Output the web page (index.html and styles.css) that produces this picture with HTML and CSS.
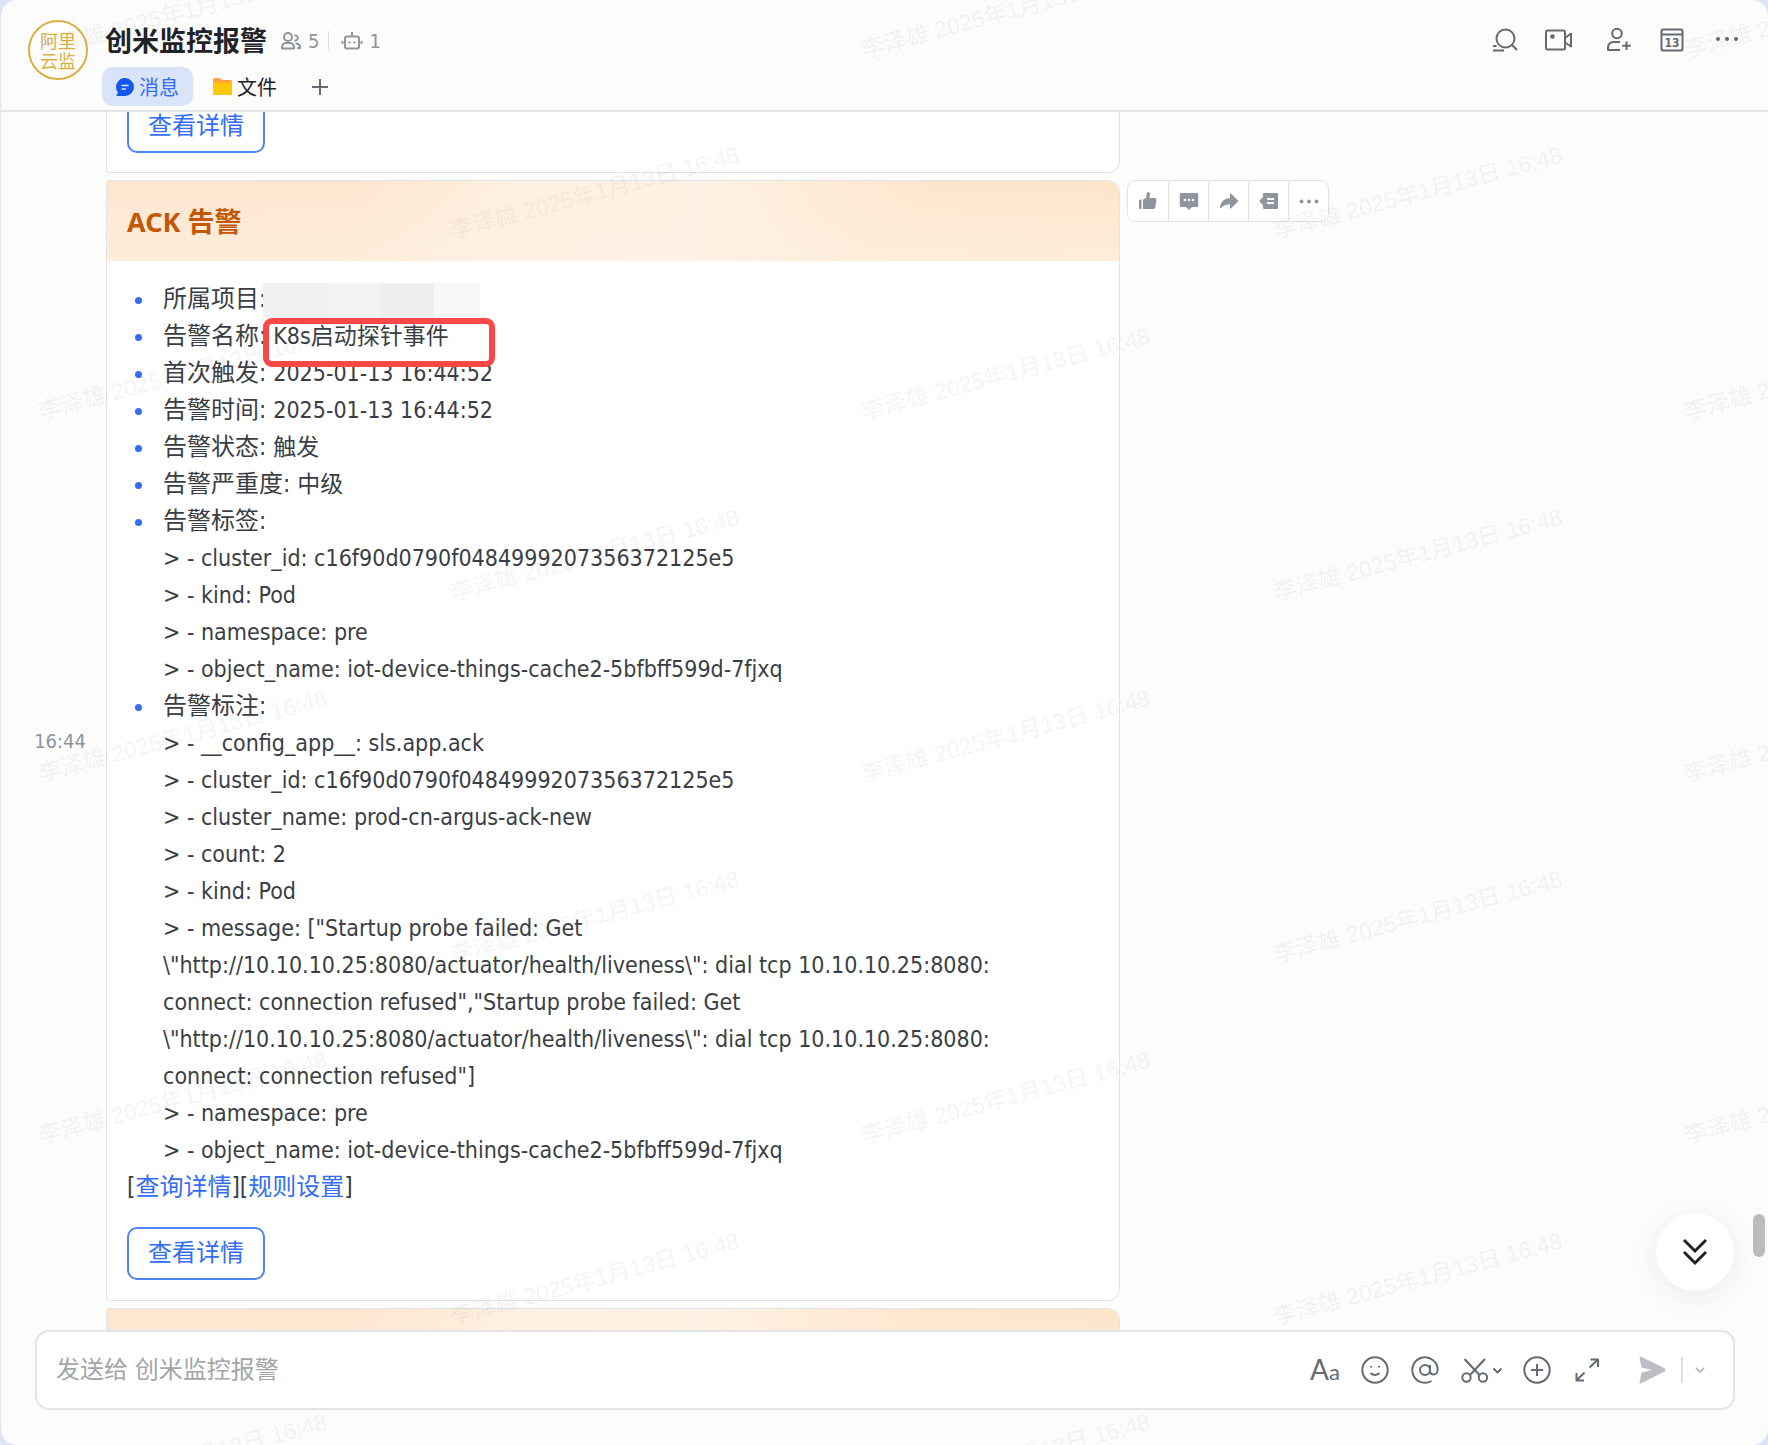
FILE: index.html
```html
<!DOCTYPE html>
<html lang="zh-CN">
<head>
<meta charset="utf-8">
<meta name="viewport" content="width=device-width, initial-scale=1">
<title>创米监控报警</title>
<link rel="stylesheet" href="styles.css">
</head>
<body>
<div class="window">
  <header class="chat-header">
    <div class="avatar">阿里<br>云监</div>
    <div class="chat-info">
      <div class="title-row">
        <h1 class="title">创米监控报警</h1>
        <div class="counts">
          <span class="count">
            <svg width="22" height="20" viewBox="0 0 22 20" class="line"><circle cx="8" cy="6" r="4"/><path d="M2 17.500c0-4 2-5.500 4-5.500h4c2.500 0 4 1.500 4 5.500z"/><path d="M14.500 4.500a2.600 2.600 0 1 1 0 5M15.500 12.500c3.500 0 4.700 1.500 4.700 4.500h-3"/></svg>
            5</span>
          <span class="count">
            <svg width="22" height="20" viewBox="0 0 22 20" class="line"><rect x="4" y="5.500" width="14" height="12" rx="2"/><path d="M11 5V1M1.500 10v3M20.500 10v3M8.500 10.500v2M13.500 10.500v2"/></svg>
            1</span>
        </div>
      </div>
      <nav class="tabs">
        <a href="#messages" class="tab tab-active">
          <svg width="18" height="18" viewBox="0 0 18 18"><path fill="#1456f0" d="M9 0a9 9 0 1 1 0 18H1.500A1 1 0 0 1 .7 16.500L2 14.500A9 9 0 0 1 9 0z"/><path d="M5.500 7.500h7M5.500 11h4.500" stroke="#dbe4fa" stroke-width="1.600"/></svg>
          消息</a>
        <a href="#files" class="tab">
          <svg width="19" height="17" viewBox="0 0 19 17"><path fill="#ff9f43" d="M0 1.500A1.500 1.500 0 0 1 1.500 0h5l2.500 2h8.500A1.500 1.500 0 0 1 19 3.500V8H0z"/><path fill="#ffc60a" d="M0 4.500h19v11a1.500 1.500 0 0 1-1.500 1.500h-16A1.500 1.500 0 0 1 0 15.500z"/></svg>
          文件</a>
        <button class="tab-add" type="button" aria-label="添加标签页"><svg width="16" height="16" viewBox="0 0 16 16" class="line"><path d="M8 0v16M0 8h16"/></svg></button>
      </nav>
    </div>
    <div class="header-actions">
      <button type="button" aria-label="搜索"><svg width="28" height="28" viewBox="-2 0 28 28" class="line"><circle cx="14.500" cy="12.500" r="9"/><path d="M21 19l5 5M2 20h3.500M2 24.500h11"/></svg></button>
      <button type="button" aria-label="视频会议"><svg width="28" height="28" viewBox="0 0 28 28" class="line"><rect x="1" y="4.500" width="19" height="19" rx="1.500"/><path d="M20 12l6-4.500v13L20 16.500"/><circle cx="7.500" cy="10.500" r="1.300" fill="#646a73"/></svg></button>
      <button type="button" aria-label="添加成员"><svg width="28" height="28" viewBox="-3 0 28 28" class="line"><circle cx="13" cy="7.500" r="4.800"/><path d="M16 16h-6c-4 0-6 2.500-6 6v2h12M22.500 15.500v8.500M18.200 19.800h8.600"/></svg></button>
      <button type="button" aria-label="日历"><svg width="28" height="28" viewBox="-1 0 28 28" class="line"><rect x="3.500" y="3.500" width="21" height="21" rx="1.500"/><path d="M3.500 8.500h21"/><text x="14" y="21" text-anchor="middle" class="cal-day">13</text></svg></button>
      <button type="button" aria-label="更多"><svg width="28" height="28" viewBox="0 0 28 28" class="dots"><circle cx="5" cy="13" r="2"/><circle cx="14" cy="13" r="2"/><circle cx="23" cy="13" r="2"/></svg></button>
    </div>
  </header>

  <main class="messages" id="messages">
    <article class="message">
      <section class="card card-tail">
        <button class="detail-button" type="button">查看详情</button>
      </section>
    </article>

    <article class="message">
      <time class="time">16:44</time>
      <section class="card">
        <h2 class="card-title">ACK 告警</h2>
        <div class="card-body">
          <ul class="fields">
            <li><span class="label">所属项目:</span><span class="redacted"></span></li>
            <li><span class="label">告警名称:</span><span class="value">K8s启动探针事件</span><span class="highlight"></span></li>
            <li><span class="label">首次触发:</span><span class="value">2025-01-13 16:44:52</span></li>
            <li><span class="label">告警时间:</span><span class="value">2025-01-13 16:44:52</span></li>
            <li><span class="label">告警状态:</span><span class="value">触发</span></li>
            <li><span class="label">告警严重度:</span><span class="value">中级</span></li>
            <li><span class="label">告警标签:</span>
              <p>&gt; - cluster_id: c16f90d0790f0484999207356372125e5</p>
              <p>&gt; - kind: Pod</p>
              <p>&gt; - namespace: pre</p>
              <p>&gt; - object_name: iot-device-things-cache2-5bfbff599d-7fjxq</p>
            </li>
            <li><span class="label">告警标注:</span>
              <p>&gt; - __config_app__: sls.app.ack</p>
              <p>&gt; - cluster_id: c16f90d0790f0484999207356372125e5</p>
              <p>&gt; - cluster_name: prod-cn-argus-ack-new</p>
              <p>&gt; - count: 2</p>
              <p>&gt; - kind: Pod</p>
              <p>&gt; - message: ["Startup probe failed: Get<br>\"http://10.10.10.25:8080/actuator/health/liveness\": dial tcp 10.10.10.25:8080:<br>connect: connection refused","Startup probe failed: Get<br>\"http://10.10.10.25:8080/actuator/health/liveness\": dial tcp 10.10.10.25:8080:<br>connect: connection refused"]</p>
              <p>&gt; - namespace: pre</p>
              <p>&gt; - object_name: iot-device-things-cache2-5bfbff599d-7fjxq</p>
            </li>
          </ul>
          <p class="links">[<a href="#query">查询详情</a>][<a href="#rules">规则设置</a>]</p>
          <button class="detail-button" type="button">查看详情</button>
        </div>
      </section>
      <div class="message-actions">
        <button type="button" aria-label="点赞"><svg width="20" height="20" viewBox="0 0 20 20"><path d="M1 9.500Q1 8.500 3.500 8.500V18Q1 18.500 1 17zM5 8.500L8 7l.8-5Q9.200.8 10.500 1q1.700.3 1.500 2.500L11.500 7H17q1.800.2 1.500 2l-1.300 7.500Q16.800 18 15.500 18H5z"/></svg></button>
        <button type="button" aria-label="回复"><svg width="20" height="20" viewBox="0 0 20 20"><path d="M2 2h16q1.200 0 1.200 1.200v11.600Q19.200 16 18 16h-5l-3 3-3-3H2Q.8 16 .8 14.800V3.200Q.8 2 2 2z"/><g fill="#fff"><circle cx="6" cy="9" r="1.300"/><circle cx="10" cy="9" r="1.300"/><circle cx="14" cy="9" r="1.300"/></g></svg></button>
        <button type="button" aria-label="转发"><svg width="20" height="20" viewBox="0 0 20 20"><path d="M11 3q0-1.200 1-.5l7 7q.5.500 0 1l-7 7q-1 .7-1-.5v-3.500q-6-.5-9 3.500-1 .5-1-.5Q2 7.500 11 7z"/></svg></button>
        <button type="button" aria-label="话题"><svg width="20" height="20" viewBox="0 0 20 20"><path d="M5 2h13q1 0 1 1v14q0 1-1 1H5q-1 0-1-1v-3L.8 10.700q-.6-.7 0-1.400L4 6V3q0-1 1-1z"/><path d="M8 8h7M8 12h7" stroke="#fff" stroke-width="1.800"/></svg></button>
        <button type="button" aria-label="更多操作"><svg width="20" height="20" viewBox="0 0 20 20"><circle cx="2.500" cy="10.500" r="2"/><circle cx="10" cy="10.500" r="2"/><circle cx="17.500" cy="10.500" r="2"/></svg></button>
      </div>
    </article>

    <article class="message">
      <section class="card">
        <h2 class="card-title">ACK 告警</h2>
      </section>
    </article>

    <button class="jump-latest" type="button" aria-label="跳到最新"><svg width="26" height="28" viewBox="0 0 26 28"><path d="M2 2l11 11L24 2M2 14l11 11L24 14"/></svg></button>
    <div class="scroll-thumb"></div>
  </main>

  <form class="composer">
    <input type="text" class="composer-input" aria-label="消息" placeholder="发送给 创米监控报警">
    <div class="composer-actions">
      <button type="button" class="format" aria-label="格式">A<span class="format-small">a</span></button>
      <button type="button" aria-label="表情"><svg width="30" height="30" viewBox="0 0 30 30" class="line"><circle cx="15" cy="15" r="12.700"/><path d="M10.500 18q4.500 4 9 0"/><path d="M11 11v1.500M19 11v1.500"/></svg></button>
      <button type="button" aria-label="提及"><svg width="30" height="30" viewBox="0 0 30 30" class="line"><circle cx="15" cy="15" r="5"/><path d="M20 10v6.500q.5 3 3.500 3 3.700 0 4.200-4.500A12.700 12.700 0 1 0 21.500 26"/></svg></button>
      <button type="button" aria-label="截图"><svg width="42" height="30" viewBox="0 0 42 30" class="line"><path d="M4.500 4L20 20.500M25 4L9.500 20.500"/><circle cx="6.500" cy="22.500" r="4.200"/><circle cx="23" cy="22.500" r="4.200"/><path d="M33.500 13.500l4 4 4-4"/></svg></button>
      <button type="button" aria-label="添加"><svg width="30" height="30" viewBox="0 0 30 30" class="line"><circle cx="15" cy="15" r="12.700"/><path d="M15 9v12M9 15h12"/></svg></button>
      <button type="button" aria-label="展开"><svg width="30" height="30" viewBox="0 0 30 30" class="line"><path d="M17.500 12.500L26 4.500M18.500 4.500H26V12M12.500 17.500L4.500 25.500M4.500 18v7.500H12"/></svg></button>
      <button type="submit" class="send" aria-label="发送"><svg width="30" height="30" viewBox="0 0 30 30"><path fill="#bbbfc4" d="M2.500 2.300q.5-1 1.800-.6L28 13.500q1.500 1.300 0 2.700L4.300 28.300q-1.300.4-1.800-.6L4.500 17.500 15 15 4.500 12.500z"/></svg></button>
      <button type="button" class="send-more" aria-label="发送选项"><svg width="10" height="10" viewBox="0 0 10 10"><path d="M1 3l4 4 4-4" fill="none" stroke="#bbbfc4" stroke-width="2"/></svg></button>
    </div>
  </form>

  <svg class="watermark" width="100%" height="100%" aria-hidden="true">
    <defs>
      <pattern id="mark" width="823" height="362" patternUnits="userSpaceOnUse">
        <text transform="translate(40 58) rotate(-15)">李泽雄 2025年1月13日 16:48</text>
        <text transform="translate(40 420) rotate(-15)">李泽雄 2025年1月13日 16:48</text>
        <text transform="translate(452 239) rotate(-15)">李泽雄 2025年1月13日 16:48</text>
      </pattern>
    </defs>
    <rect width="100%" height="100%" fill="url(#mark)"/>
  </svg>
</div>
</body>
</html>
```

FILE: styles.css
```css
* {
  box-sizing: border-box;
  margin: 0;
  padding: 0;
}

body {
  background: #dee3f6;
  color: #3a3e44;
  font-family: "DejaVu Sans Condensed", "Noto Sans CJK SC", sans-serif;
}

button {
  display: flex;
  align-items: center;
  justify-content: center;
  border: 0;
  background: none;
  font: inherit;
  cursor: pointer;
}

a {
  color: #336df4;
  text-decoration: none;
}

svg {
  flex: none;
}

.line {
  fill: none;
  stroke: #646a73;
  stroke-width: 2;
  stroke-linejoin: round;
}

.window {
  position: relative;
  display: flex;
  flex-direction: column;
  height: 100vh;
  margin-left: 1px;
  padding-bottom: 35px;
  overflow: hidden;
  border-radius: 16px;
  background: #fcfcfb;
}

/* Header */

.chat-header {
  display: flex;
  align-items: flex-start;
  height: 112px;
  padding: 20px 27px 0;
  border-bottom: 2px solid #e3e4e5;
}

.avatar {
  display: flex;
  align-items: center;
  justify-content: center;
  width: 60px;
  height: 60px;
  padding-top: 3px;
  border: 2px solid #dcae42;
  border-radius: 50%;
  background: #fff;
  color: #dcae42;
  font-size: 18px;
  line-height: 20px;
}

.chat-info {
  flex: 1;
  margin-left: 14px;
}

.title-row {
  display: flex;
  align-items: center;
  height: 42px;
  padding-left: 3px;
}

.title {
  color: #1f2329;
  font-size: 27px;
  line-height: 42px;
  padding-top: 2px;
  font-weight: 700;
}

.counts {
  display: flex;
  align-items: center;
  margin-left: 13px;
  color: #8f959e;
  font-size: 20px;
  line-height: 20px;
}

.counts .line {
  stroke: #8f959e;
}

.count {
  display: flex;
  align-items: center;
  gap: 6px;
}

.count + .count {
  margin-left: 9px;
  padding-left: 12px;
  border-left: 1px solid #dee0e3;
}

.tabs {
  display: flex;
  align-items: center;
  margin-top: 5px;
}

.tab {
  display: flex;
  align-items: center;
  gap: 5px;
  height: 39px;
  padding: 0 14px;
  border-radius: 10px;
  color: #1f2329;
  font-size: 20px;
}

.tab + .tab {
  margin-left: 6px;
}

.tab-active {
  background: #dae4f9;
  color: #336df4;
}

.tab-add {
  width: 40px;
  height: 39px;
  margin-left: 9px;
}

.header-actions {
  display: flex;
  gap: 28px;
  padding-top: 6px;
}

.header-actions svg {
  overflow: visible;
}

.dots {
  fill: #646a73;
}

.cal-day {
  fill: #646a73;
  stroke: none;
  font-size: 12px;
  font-weight: 700;
}

/* Message list */

.messages {
  position: relative;
  display: flex;
  flex: 1;
  flex-direction: column;
  gap: 7px;
  min-height: 0;
  overflow: hidden;
}

.message {
  display: grid;
  flex: none;
  grid-template-columns: 105px minmax(0, 1014px) auto;
  align-items: start;
}

.time {
  align-self: center;
  padding-right: 20px;
  color: #8f959e;
  font-size: 20px;
  text-align: right;
}

.card {
  grid-column: 2;
  overflow: hidden;
  border: 1px solid #e1e3e6;
  border-radius: 4px 12px 12px 4px;
  background: #fff;
}

.card-tail {
  padding: 0 20px 19px;
  border-top: 0;
  border-radius: 0 0 12px 4px;
}

.card-tail .detail-button {
  margin-top: -12px;
}

.card-title {
  height: 80px;
  padding: 0 20px;
  background:
    linear-gradient(to bottom, rgba(255, 241, 228, 0), rgba(255, 241, 228, 0.6)),
    linear-gradient(100deg, #fde7d0 0%, #fde6cf 24%, #fff0e1 40%, #fff1e3 58%, #fee6cd 80%, #fee5cb 100%);
  color: #c25705;
  font-family: "Noto Sans", "Noto Sans CJK SC", sans-serif;
  font-size: 27px;
  font-weight: 700;
  line-height: 82px;
}

.card-body {
  padding: 20px;
  font-size: 23px;
  line-height: 37px;
}

.fields {
  list-style: none;
}

.fields li {
  position: relative;
  padding-left: 36px;
}

.fields li::before {
  content: "";
  position: absolute;
  top: 16px;
  left: 8px;
  width: 7px;
  height: 7px;
  border-radius: 50%;
  background: #336df4;
}

.label {
  font-size: 24px;
  line-height: 24px;
}

.value {
  margin-left: 7px;
}

.fields p {
  white-space: nowrap;
}

.redacted {
  position: absolute;
  top: 2px;
  left: 136px;
  width: 217px;
  height: 35px;
  background: linear-gradient(to right, #f0f0f0 30%, #f3f3f3 30% 54%, #efefef 54% 79%, #f8f8f8 79%);
}

.highlight {
  position: absolute;
  top: 0;
  left: 136px;
  width: 232px;
  height: 49px;
  border: 6px solid #fa4848;
  border-radius: 9px;
}

.fields li:has(.highlight) {
  z-index: 1;
}

.links {
  margin-bottom: 21px;
  font-size: 24px;
}

.detail-button {
  height: 53px;
  padding: 0 19px;
  border: 2px solid #5083f5;
  border-radius: 10px;
  background: #fff;
  color: #336df4;
  font-size: 24px;
  line-height: 37px;
}

.message-actions {
  display: flex;
  justify-self: start;
  margin-left: 7px;
  border: 1px solid #e1e3e6;
  border-radius: 8px;
  background: #fff;
}

.message-actions button {
  width: 40px;
  height: 40px;
  fill: #8f959e;
}

.message-actions button + button {
  border-left: 1px solid #e1e3e6;
}

.jump-latest {
  position: absolute;
  right: 34px;
  bottom: 39px;
  width: 78px;
  height: 78px;
  border-radius: 50%;
  background: #fff;
  box-shadow: 0 6px 28px rgba(31, 35, 41, 0.08);
  fill: none;
  stroke: #1f2329;
  stroke-width: 3;
}

.scroll-thumb {
  position: absolute;
  right: 3px;
  bottom: 73px;
  width: 12px;
  height: 43px;
  border-radius: 6px;
  background: #bbbcbe;
}

/* Composer */

.composer {
  display: flex;
  align-items: center;
  height: 80px;
  margin: 0 33px 0 34px;
  padding: 0 28px 0 19px;
  border: 2px solid #e3e4e5;
  border-radius: 14px;
  background: #fff;
}

.composer-input {
  flex: 1;
  min-width: 0;
  border: 0;
  outline: 0;
  background: none;
  color: #1f2329;
  font: inherit;
  font-size: 24px;
}

.composer-input::placeholder {
  color: #a3a5a8;
}

.composer-actions {
  display: flex;
  align-items: center;
  gap: 20px;
}

.format {
  align-items: baseline;
  color: #646a73;
  font-family: Lato, sans-serif;
  font-size: 28px;
  line-height: 30px;
}

.format-small {
  font-size: 22px;
}

.send {
  margin-left: 15px;
}

.send-more {
  height: 26px;
  margin-left: -6px;
  padding-left: 12px;
  border-left: 2px solid #dee0e3;
}

/* Watermark over the whole window */

.watermark {
  position: absolute;
  inset: 0;
  z-index: 2;
  fill: rgba(31, 35, 60, 0.05);
  font-family: "Liberation Sans", "Noto Sans CJK SC", sans-serif;
  font-size: 23px;
  pointer-events: none;
}
```
